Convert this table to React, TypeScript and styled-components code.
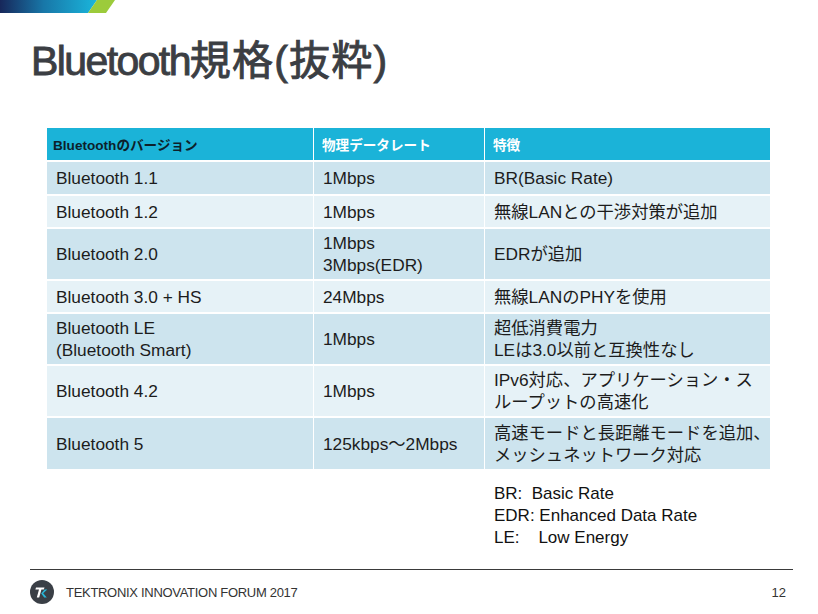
import React from "react";
import styled, { createGlobalStyle } from "styled-components";

const Global = createGlobalStyle`
  html, body { margin: 0; padding: 0; background: #ffffff; }
  body { font-family: "Liberation Sans", "Noto Sans CJK JP", Arial, sans-serif; }
`;

const Slide = styled.div`
  width: 818px;
  height: 614px;
  overflow: hidden;
  position: relative;
  display: flex;
  flex-direction: column;
  background: #ffffff;
`;

const Banner = styled.svg`
  display: block;
  width: 120px;
  height: 13px;
  flex: none;
`;

const Title = styled.h1`
  margin: 21px 0 0 31px;
  height: 54px;
  font-family: "Liberation Sans", "Noto Sans CJK JP", sans-serif;
  font-size: 41px;
  line-height: 54px;
  font-weight: 400;
  letter-spacing: -1.6px;
  -webkit-text-stroke: 0.9px #3b3e43;
  color: #3b3e43;
  white-space: nowrap;
`;

const TitleCjk = styled.span`
  letter-spacing: 1.2px;
`;

const TableGrid = styled.div`
  margin: 40px 0 0 47px;
  width: 723px;
  display: grid;
  grid-template-columns: 266px 170px 285px;
  column-gap: 1px;
  row-gap: 2px;
`;

const HeadCell = styled.div<{ $light?: boolean }>`
  height: 32px;
  background: #1bb3d8;
  display: flex;
  align-items: center;
  padding-left: ${(p) => (p.$light ? "8px" : "6px")};
  font-family: "Liberation Sans", "Noto Sans CJK JP", sans-serif;
  font-weight: 700;
  font-size: 13.6px;
  color: ${(p) => (p.$light ? "#ffffff" : "#0d1f2b")};
`;

const Cell = styled.div<{ $alt: boolean; $h: number }>`
  height: ${(p) => p.$h}px;
  background: ${(p) => (p.$alt ? "#e6f2f7" : "#cde4ee")};
  display: flex;
  flex-direction: column;
  justify-content: center;
  padding-left: 9px;
  font-size: 17.3px;
  line-height: 22px;
  color: #1c1c1c;
  white-space: nowrap;
  overflow: hidden;
`;

const Legend = styled.div`
  margin: 14px 0 0 494px;
  font-size: 17px;
  line-height: 22px;
  color: #111;
  white-space: pre;
`;

const Spacer = styled.div`
  flex: 1;
`;

const Rule = styled.div`
  margin: 0 25px 0 30px;
  height: 1px;
  background: #3a3a3a;
`;

const Footer = styled.div`
  height: 44px;
  display: flex;
  align-items: center;
  padding: 0 32px 0 30px;
  gap: 12px;
  font-family: "Liberation Sans", sans-serif;
  font-size: 13px;
  color: #333;
`;

const FooterText = styled.span`
  flex: 1;
  letter-spacing: -0.3px;
`;

const PageNo = styled.span`
  font-size: 13px;
  color: #333;
`;

const Logo = () => (
  <svg width="24" height="24" viewBox="0 0 24 24">
    <circle cx="12" cy="12" r="12" fill="#3a3f46" />
    <path d="M6 7.5 H14.5 L13.8 9.6 H11.4 L9.2 17.5 H6.8 L9 9.6 H5.4 Z" fill="#ffffff" />
    <path d="M14.6 9.5 L17.3 9.5 L13.2 13.2 L16.8 17.5 L14.2 17.5 L11.2 13.6 Z" fill="#2ab6d6" />
  </svg>
);

type Row = { v: string[]; r: string[]; f: string[]; h: number };

const rows: Row[] = [
  { v: ["Bluetooth 1.1"], r: ["1Mbps"], f: ["BR(Basic Rate)"], h: 32 },
  { v: ["Bluetooth 1.2"], r: ["1Mbps"], f: ["無線LANとの干渉対策が追加"], h: 31 },
  { v: ["Bluetooth 2.0"], r: ["1Mbps", "3Mbps(EDR)"], f: ["EDRが追加"], h: 50 },
  { v: ["Bluetooth 3.0 + HS"], r: ["24Mbps"], f: ["無線LANのPHYを使用"], h: 31 },
  { v: ["Bluetooth LE", "(Bluetooth Smart)"], r: ["1Mbps"], f: ["超低消費電力", "LEは3.0以前と互換性なし"], h: 50 },
  { v: ["Bluetooth 4.2"], r: ["1Mbps"], f: ["IPv6対応、アプリケーション・ス", "ループットの高速化"], h: 50 },
  { v: ["Bluetooth 5"], r: ["125kbps～2Mbps"], f: ["高速モードと長距離モードを追加、", "メッシュネットワーク対応"], h: 51 },
];

const Lines = ({ items }: { items: string[] }) => (
  <>
    {items.map((t) => (
      <span key={t}>{t}</span>
    ))}
  </>
);

export default function App() {
  return (
    <Slide>
      <Global />
      <Banner viewBox="0 0 120 13">
        <defs>
          <linearGradient id="bg" x1="0" y1="0" x2="1" y2="0">
            <stop offset="0" stopColor="#17275a" />
            <stop offset="0.45" stopColor="#1877a8" />
            <stop offset="1" stopColor="#1ab6dc" />
          </linearGradient>
        </defs>
        <polygon points="0,0 97,0 88,13 0,13" fill="url(#bg)" />
        <polygon points="97,0 115,0 106,13 88,13" fill="#9ccb3b" />
      </Banner>
      <Title>
        Bluetooth<TitleCjk>規格(抜粋)</TitleCjk>
      </Title>
      <TableGrid>
        <HeadCell>Bluetoothのバージョン</HeadCell>
        <HeadCell $light>物理データレート</HeadCell>
        <HeadCell $light>特徴</HeadCell>
        {rows.map((row, i) => (
          <React.Fragment key={i}>
            <Cell $alt={i % 2 === 1} $h={row.h}>
              <Lines items={row.v} />
            </Cell>
            <Cell $alt={i % 2 === 1} $h={row.h}>
              <Lines items={row.r} />
            </Cell>
            <Cell $alt={i % 2 === 1} $h={row.h}>
              <Lines items={row.f} />
            </Cell>
          </React.Fragment>
        ))}
      </TableGrid>
      <Legend>
        {"BR:  Basic Rate\nEDR: Enhanced Data Rate\nLE:    Low Energy"}
      </Legend>
      <Spacer />
      <Rule />
      <Footer>
        <Logo />
        <FooterText>TEKTRONIX INNOVATION FORUM 2017</FooterText>
        <PageNo>12</PageNo>
      </Footer>
    </Slide>
  );
}
